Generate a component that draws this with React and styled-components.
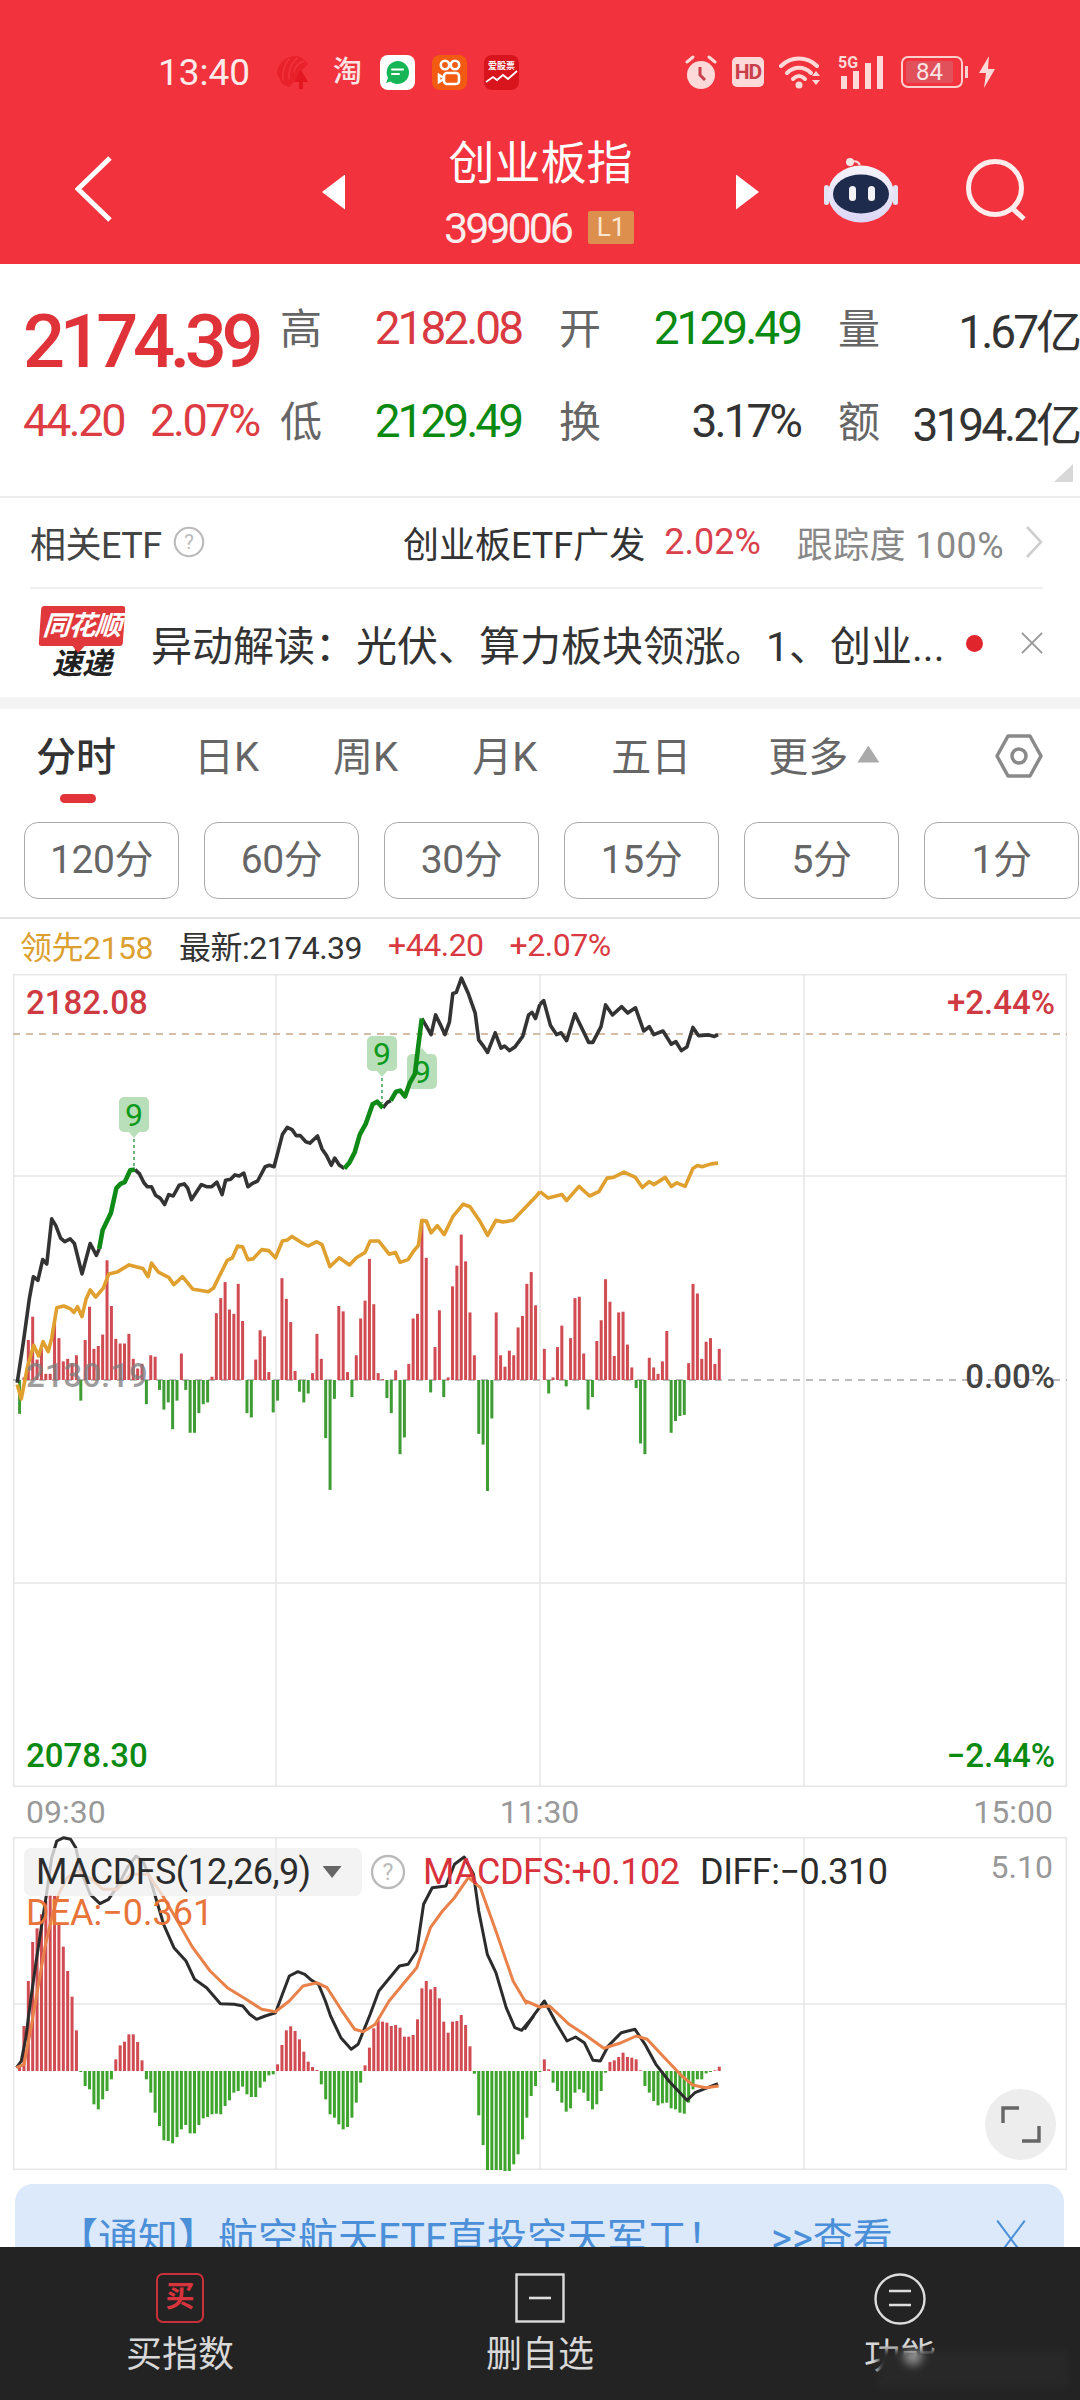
import styled, { createGlobalStyle } from 'styled-components';

// traced from the chart, in the crop coordinates they were read at
const fromLeft = (x, y) => [x / 2.904, 930 + y / 2.8];
const fromRight = (x, y) => [360 + x / 2.178, 930 + y / 2.8];
const macdLeft = (x, y) => [x / 2.904, 1770 + y / 3];
const macdRight = (x, y) => [400 + x / 2.306, 1770 + y / 3];

const toPoints = (list, map) =>
  list.map(([x, y]) => map(x, y).map((n) => n.toFixed(1)).join(',')).join(' ');

const priceA = [[50,1265],[68,1150],[85,1030],[97,968],[110,978],[124,920],[136,932],[150,806],[162,825],[176,860],[188,870],[204,862],[216,875],[238,960],[262,875],[280,908],[288,890]];
const priceB = [[288,890],[298,838],[322,790],[338,720],[350,708],[362,703],[378,670],[392,668]];
const priceC = [[392,668],[405,680],[418,705],[428,716],[440,716],[452,740],[465,748],[478,766],[490,738],[503,742],[520,712],[535,708],[545,720],[556,752],[585,710],[600,716],[615,716],[630,703],[645,738],[655,698],[670,695],[682,683],[695,686],[708,678],[720,716],[735,706],[748,700],[770,660],[782,656],[796,660],[820,570],[834,550],[848,556],[860,573],[872,573],[888,590],[900,594],[922,574],[935,610],[948,628],[962,656],[972,636],[985,655],[1000,665]];
const priceD = [[1000,665],[1015,648],[1030,620],[1045,570],[1062,540],[1082,485],[1095,478],[1112,495]];
const priceE = [[1112,495],[1125,480],[1135,475]];
const priceF = [[1135,475],[1150,450],[1162,447],[1176,463],[1190,425],[1205,400],[1215,320],[1225,245]];
const priceG = [[1225,245],[1240,270],[1252,290],[1265,235],[1280,265],[1292,290],[1305,255],[1315,175],[1325,172],[1340,132],[1360,175],[1380,230],[1390,305],[1402,320],[1416,340],[1438,285],[1455,328],[1465,322],[1480,335],[1495,325],[1518,295],[1535,235],[1545,228],[1555,245],[1568,205]];
const priceI = [[392,205],[400,195],[415,265],[428,290],[438,285],[450,307],[468,232],[498,312],[507,312],[525,268],[535,207],[550,235],[570,212],[583,230],[600,215],[618,280],[630,268],[640,290],[660,280],[678,317],[688,310],[700,335],[712,325],[725,270],[737,293],[760,291],[772,295],[780,290]];
const avgA = [[50,1270],[62,1310],[80,1220],[98,1160],[112,1190],[125,1150],[140,1178],[150,1140],[165,1055],[185,1050],[205,1058],[215,1068],[225,1052],[238,1080],[250,1030],[262,1005],[278,1025],[300,1000],[316,960],[340,955],[375,935],[415,945],[430,968],[440,930],[460,955],[490,970],[505,990],[530,968],[560,1003],[580,1006],[605,1010],[620,1000],[635,970],[660,922],[675,915],[690,882],[705,885],[720,920],[735,918],[760,892],[780,895],[800,915],[820,868],[835,865],[848,855],[880,875],[895,882],[920,870],[935,878],[958,940],[985,915],[1015,935],[1035,915],[1060,900],[1075,868],[1100,868],[1130,905],[1148,900],[1162,928],[1185,920],[1200,898],[1215,880],[1225,810],[1238,812],[1252,845],[1270,825],[1290,850],[1315,800],[1345,765],[1365,772],[1395,815],[1416,852],[1440,810],[1460,815],[1490,810],[1525,775],[1555,745],[1568,730]];
const avgB = [[392,730],[410,748],[440,738],[450,755],[477,715],[500,742],[520,730],[538,692],[552,690],[575,675],[600,690],[615,718],[630,702],[640,710],[665,690],[678,715],[690,705],[708,715],[725,665],[735,657],[745,660],[765,652],[780,650]];

// volume bars: y the bar reaches, 1258 is the base line
const volumes = [1258,1352,1250,1145,1080,1200,1170,1240,1240,1090,1140,1205,1198,1210,1188,1315,1145,1052,1170,1162,1130,922,1050,1142,1155,1155,1128,1198,1225,1212,1325,1188,1192,1285,1340,1320,1395,1315,1183,1285,1405,1405,1350,1325,1320,1248,1070,1028,983,1060,1072,988,1092,1350,1362,1200,1118,1135,1235,1348,1315,972,1030,1095,1232,1290,1320,1295,1238,1128,1198,1420,1565,1310,1050,1065,1235,1305,1188,1085,1035,918,1045,1238,1255,1308,1350,1230,1465,1418,1212,1085,1072,808,915,1292,1165,1062,1305,1250,995,937,850,925,1068,1188,1408,1438,1568,1365,1068,1188,1220,1175,1188,1110,1078,988,955,1048,1258,1170,1295,1250,1165,1105,1275,1140,1028,1024,1183,1340,1305,1148,1090,975,1038,1190,1068,1066,1158,1222,1280,1435,1465,1195,1222,1240,1205,1120,1405,1372,1358,1355,1210,988,1015,1198,1150,1140,1212,1170];

// macd bars: 900 is the zero line
const macdBars = [900,885,765,630,513,472,430,390,372,375,455,527,600,677,778,903,945,955,1000,1015,985,960,925,865,823,812,790,790,813,868,925,965,1025,1065,1108,1110,1117,1098,1075,1062,1087,1087,1062,1042,1038,1030,1028,1030,1005,988,965,960,947,970,978,978,950,932,913,910,880,822,778,766,780,805,842,872,888,897,940,985,1030,1040,1060,1075,1068,1040,995,935,883,830,772,748,752,755,765,762,770,797,797,792,745,652,630,655,648,682,752,785,752,750,732,762,826,908,1033,1122,1197,1197,1197,1197,1200,1200,1180,1150,1105,1040,975,945,903,865,895,935,960,995,1022,1012,965,955,965,990,1015,1000,960,905,873,868,858,845,858,860,865,898,945,965,990,1003,997,995,1012,1015,1025,1028,995,955,925,925,907,903,898,887];

const diffA = [[48,890],[62,870],[75,800],[90,680],[105,570],[120,470],[135,370],[150,260],[165,210],[185,200],[205,205],[220,230],[235,300],[262,370],[290,398],[315,385],[345,340],[370,290],[395,255],[415,270],[435,320],[455,390],[475,460],[505,530],[540,570],[565,625],[600,650],[640,698],[680,700],[705,705],[725,730],[745,745],[770,735],[800,725],[820,670],[840,615],[865,602],[885,610],[905,628],[925,640],[945,690],[960,735],[990,800],[1020,835],[1040,820],[1075,730],[1100,660],[1140,610],[1160,585],[1185,580],[1210,540],[1230,400],[1255,350],[1295,345],[1320,280],[1348,258],[1375,310],[1390,420],[1415,550],[1440,605],[1470,710],[1495,770],[1515,778],[1550,735]];
const diffB = [[287,775],[310,730],[333,690],[360,755],[385,810],[405,798],[425,815],[445,868],[462,870],[480,825],[510,785],[542,775],[565,820],[590,880],[620,930],[662,988],[680,965],[705,952],[733,938]];
const deaA = [[48,890],[70,880],[90,770],[110,650],[130,530],[150,440],[170,370],[195,320],[225,300],[260,320],[300,355],[340,355],[380,310],[430,310],[470,370],[510,440],[560,530],[610,600],[660,650],[710,682],[760,715],[800,722],[840,690],[880,645],[920,635],[950,650],[990,715],[1030,775],[1055,782],[1090,760],[1130,690],[1170,640],[1210,590],[1250,470],[1285,420],[1320,380],[1360,320],[1395,350],[1440,480],[1490,630],[1530,700]];
const deaB = [[290,690],[322,708],[345,705],[390,760],[425,790],[470,832],[510,815],[545,795],[570,805],[610,860],[650,915],[675,942],[705,950],[735,945]];

const barX = (i) => 15.2 + i * 4.373 - 1.5;

const FRAME_X = [13, 276, 540, 804, 1067];

const Bars = ({ data, toY, base, up, down }) =>
  data.map((value, i) => {
    const y = toY(value);
    if (Math.abs(y - base) < 0.4) return null;
    return (
      <rect
        key={i}
        x={barX(i)}
        y={Math.min(y, base)}
        width="3"
        height={Math.abs(y - base)}
        fill={y < base ? up : down}
      />
    );
  });

const Badge = ({ x, y, pointUp, stem }) => (
  <g>
    {stem && <line x1={x} x2={x} y1={y + 42} y2={y + 42 + stem} stroke="#3c9c50" strokeWidth="1.5" strokeDasharray="3 3" />}
    <rect x={x - 15} y={y} width="30" height="35" rx="5" fill="#b9dfba" />
    {pointUp ? (
      <path d={`M${x - 6} ${y + 1}L${x} ${y - 6}L${x + 6} ${y + 1}Z`} fill="#b9dfba" />
    ) : (
      <path d={`M${x - 6} ${y + 34}L${x} ${y + 41}L${x + 6} ${y + 34}Z`} fill="#b9dfba" />
    )}
    <text x={x} y={y + 29} textAnchor="middle" fontSize="32" fontFamily="Roboto, sans-serif" fill="#0c9a1c">9</text>
  </g>
);

const ShellIcon = () => (
  <svg width="38" height="36" viewBox="0 0 38 36">
    <path d="M3 20C3 10 11 3 20 2C26 2 31 5 34 10L27 17L23 25L15 33L8 30Z" fill="#e8222b" />
    <g fill="none" stroke="#f2333d" strokeWidth="1.6" strokeLinecap="round">
      <path d="M9 26C8 18 10 11 15 5" />
      <path d="M15 25C14 18 17 10 23 4" />
      <path d="M20 18C21 13 24 9 30 7" />
    </g>
    <path d="M27 16L34 28H29V35H25V28H20Z" fill="#e2171f" />
  </svg>
);

const ChatApp = () => (
  <svg width="35" height="35" viewBox="0 0 35 35">
    <rect width="35" height="35" rx="8" fill="#fff" />
    <path d="M17.5 6a11.5 11.5 0 1 1-7 20.6L6 28l2-5A11.5 11.5 0 0 1 17.5 6Z" fill="#16b657" />
    <path d="M12 14.5h11M12 19h7" stroke="#fff" strokeWidth="2" strokeLinecap="round" />
  </svg>
);

const OrangeApp = () => (
  <svg width="35" height="35" viewBox="0 0 35 35">
    <rect width="35" height="35" rx="8" fill="#f35a12" />
    <g fill="none" stroke="#fff" strokeWidth="2.6">
      <circle cx="13" cy="10" r="4.2" />
      <circle cx="23" cy="10" r="4.2" />
      <rect x="12" y="18" width="15" height="11" rx="3" />
      <path d="M12 23L7 20V27L12 24" />
    </g>
  </svg>
);

const StockApp = () => (
  <svg width="35" height="35" viewBox="0 0 35 35">
    <rect width="35" height="35" rx="8" fill="#d8141c" />
    <text x="17.5" y="14" textAnchor="middle" fontSize="9" fontWeight="700" fontFamily="Noto Sans CJK SC, sans-serif" fill="#fff">爱股票</text>
    <path d="M2 27L9 22L13 25L19 20L24 24L33 16" fill="none" stroke="#fff" strokeWidth="1.8" />
  </svg>
);

const AlarmIcon = () => (
  <svg width="32" height="36" viewBox="0 0 32 36">
    <circle cx="16" cy="21" r="14" fill="#fdd9d9" />
    <path d="M2 8L8 3M30 8L24 3" stroke="#fdd9d9" strokeWidth="3" strokeLinecap="round" />
    <path d="M15 13V21L20 26" fill="none" stroke="#c9404a" strokeWidth="3" />
  </svg>
);

const WifiIcon = () => (
  <svg width="44" height="34" viewBox="0 0 44 34">
    <g fill="none" stroke="#fdd9d9" strokeWidth="4" strokeLinecap="round">
      <path d="M2 11C12 1 28 1 38 11" />
      <path d="M8 18C15 11 25 11 32 18" />
      <path d="M14 24C18 20 22 20 26 24" />
    </g>
    <circle cx="20" cy="30" r="3.5" fill="#fdd9d9" />
    <path d="M33 21L37 16L41 21ZM33 25H41L37 30Z" fill="#fdd9d9" />
  </svg>
);

const SignalIcon = () => (
  <svg width="46" height="36" viewBox="0 0 46 36">
    <text x="0" y="14" fontSize="16" fontWeight="700" fontFamily="Roboto, sans-serif" fill="#fdd9d9">5G</text>
    <g fill="#fdd9d9">
      <rect x="3" y="22" width="6" height="13" />
      <rect x="15" y="17" width="6" height="18" />
      <rect x="27" y="9" width="6" height="26" />
      <rect x="39" y="2" width="6" height="33" />
    </g>
  </svg>
);

const BoltIcon = () => (
  <svg width="18" height="32" viewBox="0 0 18 32">
    <path d="M11 0L1 17H8L6 32L17 13H10Z" fill="#fdd9d9" />
  </svg>
);

const BackIcon = () => (
  <svg width="38" height="66" viewBox="0 0 38 66">
    <path d="M35 2L3 33L35 64" fill="none" stroke="#fff" strokeWidth="5" />
  </svg>
);

const RobotIcon = () => (
  <svg width="74" height="66" viewBox="0 0 74 66">
    <defs>
      <linearGradient id="shell" x1="0" y1="0" x2="0" y2="1">
        <stop offset="0" stopColor="#f5f5fb" />
        <stop offset="1" stopColor="#dcd6f7" />
      </linearGradient>
    </defs>
    <path d="M26 9C27 3 33 3 36 8" fill="none" stroke="#f3dede" strokeWidth="2" />
    <circle cx="26" cy="5" r="4" fill="#f5e6e6" />
    <rect x="0" y="28" width="5" height="20" rx="2.5" fill="#e3e3f3" />
    <rect x="69" y="28" width="5" height="20" rx="2.5" fill="#e3e3f3" />
    <ellipse cx="37" cy="37" rx="33" ry="28.5" fill="url(#shell)" />
    <ellipse cx="37" cy="37" rx="28" ry="19.5" fill="#1f2b4d" />
    <rect x="25" y="29" width="7" height="15" rx="3.5" fill="#f4f4f8" />
    <rect x="44" y="29" width="7" height="15" rx="3.5" fill="#f4f4f8" />
  </svg>
);

const SearchIcon = () => (
  <svg width="62" height="62" viewBox="0 0 62 62">
    <circle cx="30" cy="29" r="26.5" fill="none" stroke="#ffecec" strokeWidth="5" />
    <path d="M47 49L59 60" stroke="#ffecec" strokeWidth="5" />
  </svg>
);

const HelpIcon = ({ size }) => (
  <svg width={size} height={size} viewBox="0 0 36 36">
    <circle cx="18" cy="18" r="16" fill="none" stroke="#bbb" strokeWidth="2.4" />
    <text x="18" y="26" textAnchor="middle" fontSize="23" fontFamily="Roboto, sans-serif" fill="#bbb">?</text>
  </svg>
);

const Chevron = () => (
  <svg width="18" height="32" viewBox="0 0 18 32">
    <path d="M2 1L16 16L2 31" fill="none" stroke="#cfcfcf" strokeWidth="2.6" />
  </svg>
);

const CloseIcon = ({ color, width, height }) => (
  <svg width={width} height={height} viewBox="0 0 24 24" preserveAspectRatio="none">
    <path d="M1 1L23 23M23 1L1 23" stroke={color} strokeWidth="2" vectorEffect="non-scaling-stroke" />
  </svg>
);

const SettingsIcon = () => (
  <svg width="48" height="46" viewBox="0 0 48 46">
    <path d="M13 3H35L46 23L35 43H13L2 23Z" fill="none" stroke="#8a8a8a" strokeWidth="3.5" strokeLinejoin="round" />
    <circle cx="24" cy="23" r="7" fill="none" stroke="#8a8a8a" strokeWidth="3.5" />
  </svg>
);

const ExpandIcon = () => (
  <svg width="40" height="38" viewBox="0 0 40 38">
    <path d="M2 17V2H18M38 20V35H21" fill="none" stroke="#666" strokeWidth="3.4" />
  </svg>
);

const MinusBox = () => (
  <svg width="50" height="50" viewBox="0 0 50 50">
    <rect x="1.5" y="1.5" width="47" height="47" fill="none" stroke="#ddd" strokeWidth="2.4" />
    <path d="M14 25H36" stroke="#ddd" strokeWidth="2.6" />
  </svg>
);

const MenuCircle = () => (
  <svg width="52" height="52" viewBox="0 0 52 52">
    <circle cx="26" cy="26" r="24.5" fill="none" stroke="#ddd" strokeWidth="2.4" />
    <path d="M15 18H37M15 32H37" stroke="#ddd" strokeWidth="2.6" />
  </svg>
);

const PERIODS = ['120分', '60分', '30分', '15分', '5分', '1分'];
const TABS = ['日K', '周K', '月K', '五日'];

const GlobalStyle = createGlobalStyle`
  html, body {
    margin: 0;
    padding: 0;
    background: #fff;
  }
  * {
    box-sizing: border-box;
  }
`;

const App = () => {
  return (
    <Page>
      <GlobalStyle />
      <Scroller>
        <Header>
          <StatusBar>
            <StatusLeft>
              <Clock>13:40</Clock>
              <ShellIcon />
              <TaoIcon>淘</TaoIcon>
              <ChatApp />
              <OrangeApp />
              <StockApp />
            </StatusLeft>
            <StatusRight>
              <AlarmIcon />
              <HdTag>HD</HdTag>
              <WifiIcon />
              <SignalIcon />
              <Battery>
                <BatteryFill>84</BatteryFill>
              </Battery>
              <BoltIcon />
            </StatusRight>
          </StatusBar>
          <NavRow>
            <BackButton>
              <BackIcon />
            </BackButton>
            <Arrow $side="left" />
            <TitleBlock>
              <Title>创业板指</Title>
              <CodeLine>
                399006
                <LevelTag>L1</LevelTag>
              </CodeLine>
            </TitleBlock>
            <Arrow $side="right" />
            <RobotSlot>
              <RobotIcon />
            </RobotSlot>
            <SearchSlot>
              <SearchIcon />
            </SearchSlot>
          </NavRow>
        </Header>

        <Stats>
          <MainPrice>2174.39</MainPrice>
          <StatPair>
            <StatLabel>高</StatLabel>
            <StatValue $color="#d93a41">2182.08</StatValue>
          </StatPair>
          <StatPair>
            <StatLabel>开</StatLabel>
            <StatValue $color="#0b8a12">2129.49</StatValue>
          </StatPair>
          <StatPair>
            <StatLabel>量</StatLabel>
            <StatValue $color="#333">1.67亿</StatValue>
          </StatPair>
          <ChangeCell>
            <span>44.20</span>
            <span>2.07%</span>
          </ChangeCell>
          <StatPair>
            <StatLabel>低</StatLabel>
            <StatValue $color="#0b8a12">2129.49</StatValue>
          </StatPair>
          <StatPair>
            <StatLabel>换</StatLabel>
            <StatValue $color="#333">3.17%</StatValue>
          </StatPair>
          <StatPair>
            <StatLabel>额</StatLabel>
            <StatValue $color="#333">3194.2亿</StatValue>
          </StatPair>
          <CornerMark />
        </Stats>

        <EtfRow>
          <EtfName>相关ETF</EtfName>
          <HelpSlot>
            <HelpIcon size={32} />
          </HelpSlot>
          <EtfFund>创业板ETF广发</EtfFund>
          <EtfChange>2.02%</EtfChange>
          <EtfTrack>跟踪度 100%</EtfTrack>
          <ChevronSlot>
            <Chevron />
          </ChevronSlot>
        </EtfRow>

        <NewsRow>
          <NewsLogo>
            <LogoFlag>同花顺</LogoFlag>
            <LogoWord>速递</LogoWord>
          </NewsLogo>
          <NewsText>{'异动解读\uFF1A光伏、算力板块领涨。1、创业...'}</NewsText>
          <RedDot />
          <CloseSlot>
            <CloseIcon color="#999" width={22} height={22} />
          </CloseSlot>
        </NewsRow>

        <TabBar>
          <ActiveTab>分时</ActiveTab>
          {TABS.map((tab) => (
            <Tab key={tab}>{tab}</Tab>
          ))}
          <MoreTab>
            更多
            <MoreCaret />
          </MoreTab>
          <SettingsSlot>
            <SettingsIcon />
          </SettingsSlot>
        </TabBar>

        <PeriodRow>
          {PERIODS.map((period) => (
            <PeriodButton key={period}>{period}</PeriodButton>
          ))}
        </PeriodRow>

        <Legend>
          <LegendItem $color="#dca02f">领先2158</LegendItem>
          <LegendItem $color="#333">最新:2174.39</LegendItem>
          <LegendItem $color="#d93a41">+44.20</LegendItem>
          <LegendItem $color="#d93a41">+2.07%</LegendItem>
        </Legend>

        <PriceChart>
          <ChartSvg width="1054" height="813" viewBox="13 973 1054 813">
            <g stroke="#e6e6e6" strokeWidth="1.5">
              <rect x="13.7" y="973.7" width="1052.6" height="811.6" fill="none" />
              {FRAME_X.slice(1, 4).map((x) => (
                <line key={x} x1={x} x2={x} y1="973" y2="1786" />
              ))}
              <line x1="13" x2="1067" y1="1175" y2="1175" />
              <line x1="13" x2="1067" y1="1582" y2="1582" />
            </g>
            <line x1="13" x2="1067" y1="1033" y2="1033" stroke="#c7a98c" strokeWidth="1.5" strokeDasharray="7 6" />
            <line x1="13" x2="1067" y1="1379" y2="1379" stroke="#a8a8a8" strokeWidth="1.5" strokeDasharray="7 6" />
            <Bars data={volumes} toY={(v) => 930 + v / 2.8} base={1379} up="#d04b52" down="#3f9c34" />
            <Badge x={134} y={1096} stem={31} />
            <Badge x={382} y={1035} stem={25} />
            <Badge x={422} y={1053} pointUp />
            <g fill="none" stroke="#e0a030" strokeWidth="3.6" strokeLinejoin="round">
              <polyline points={toPoints(avgA, fromLeft)} />
              <polyline points={toPoints(avgB, fromRight)} />
            </g>
            <g fill="none" stroke="#333" strokeWidth="3.6" strokeLinejoin="round">
              <polyline points={toPoints(priceA, fromLeft)} />
              <polyline points={toPoints(priceC, fromLeft)} />
              <polyline points={toPoints(priceE, fromLeft)} />
              <polyline points={toPoints(priceG, fromLeft)} />
              <polyline points={toPoints(priceI, fromRight)} />
            </g>
            <g fill="none" stroke="#0f8a17" strokeWidth="4.6" strokeLinejoin="round">
              <polyline points={toPoints(priceB, fromLeft)} />
              <polyline points={toPoints(priceD, fromLeft)} />
              <polyline points={toPoints(priceF, fromLeft)} />
            </g>
          </ChartSvg>
          <ChartLabel $left={13} $top={10} $color="#cf3a42">2182.08</ChartLabel>
          <ChartLabel $right={12} $top={10} $color="#cf3a42">+2.44%</ChartLabel>
          <ChartLabel $left={13} $top={383} $color="rgba(125,125,125,.75)">2130.19</ChartLabel>
          <ChartLabel $right={12} $top={384} $color="#444">0.00%</ChartLabel>
          <ChartLabel $left={13} $top={763} $color="#0b8a12">2078.30</ChartLabel>
          <ChartLabel $right={12} $top={763} $color="#0b8a12">−2.44%</ChartLabel>
        </PriceChart>

        <TimeAxis>
          <span>09:30</span>
          <span>11:30</span>
          <span>15:00</span>
        </TimeAxis>

        <MacdChart>
          <IndicatorPill>
            MACDFS(12,26,9)
            <PillCaret />
          </IndicatorPill>
          <ChartSvg width="1054" height="333" viewBox="13 1836 1054 333">
            <g stroke="#e6e6e6" strokeWidth="1.5">
              <rect x="13.7" y="1836.7" width="1052.6" height="331.6" fill="none" />
              {FRAME_X.slice(1, 4).map((x) => (
                <line key={x} x1={x} x2={x} y1="1836" y2="2169" />
              ))}
              <line x1="13" x2="1067" y1="2003" y2="2003" />
            </g>
            <Bars data={macdBars} toY={(v) => 1770 + v / 3} base={2070} up="#d04b52" down="#3ea42e" />
            <g fill="none" stroke="#2c2c2c" strokeWidth="3" strokeLinejoin="round">
              <polyline points={toPoints(diffA, macdLeft)} />
              <polyline points={toPoints(diffB, macdRight)} />
            </g>
            <g fill="none" stroke="#e8824a" strokeWidth="3" strokeLinejoin="round">
              <polyline points={toPoints(deaA, macdLeft)} />
              <polyline points={toPoints(deaB, macdRight)} />
            </g>
          </ChartSvg>
          <MacdHelp>
            <HelpIcon size={36} />
          </MacdHelp>
          <MacdValue $left={410} $color="#d8323c">MACDFS:+0.102</MacdValue>
          <MacdValue $left={687} $color="#2c2c2c">DIFF:−0.310</MacdValue>
          <MacdScale>5.10</MacdScale>
          <DeaValue>DEA:−0.361</DeaValue>
          <ExpandButton>
            <ExpandIcon />
          </ExpandButton>
        </MacdChart>

        <NoticeBanner>
          <NoticeText>{'【通知】航空航天ETF直投空天军工\uFF01'}</NoticeText>
          <NoticeLink>&gt;&gt;查看</NoticeLink>
          <NoticeClose>
            <CloseIcon color="#4a8fd8" width={30} height={40} />
          </NoticeClose>
        </NoticeBanner>
      </Scroller>

      <BottomBar>
        <BottomItem>
          <BuyBox>买</BuyBox>
          <BottomLabel>买指数</BottomLabel>
        </BottomItem>
        <BottomItem>
          <MinusBox />
          <BottomLabel>删自选</BottomLabel>
        </BottomItem>
        <BottomItem>
          <MenuCircle />
          <BottomLabel>功能</BottomLabel>
        </BottomItem>
        <WatermarkSmudge />
      </BottomBar>
    </Page>
  );
};

export default App;

const Page = styled.div`
  width: 1080px;
  height: 2400px;
  display: flex;
  flex-direction: column;
  overflow: hidden;
  font-family: Roboto, 'Noto Sans CJK SC', sans-serif;
  background: #fff;
`;

const Scroller = styled.main`
  flex: 1;
  min-height: 0;
  overflow: hidden;
`;

const Header = styled.header`
  height: 264px;
  background: #f2333d;
`;

const StatusBar = styled.div`
  height: 120px;
  padding: 24px 84px 0 158px;
  display: flex;
  justify-content: space-between;
  align-items: center;
`;

const StatusLeft = styled.div`
  display: flex;
  align-items: center;
  gap: 17px;
`;

const Clock = styled.span`
  width: 99px;
  font-size: 37px;
  color: #fdeaea;
`;

const TaoIcon = styled.span`
  width: 30px;
  margin: 0 0 0 4px;
  font-size: 29px;
  font-weight: 500;
  line-height: 36px;
  color: #fde3e3;
`;

const StatusRight = styled.div`
  display: flex;
  align-items: center;
  gap: 15px;
`;

const HdTag = styled.span`
  width: 32px;
  height: 30px;
  border-radius: 5px;
  background: #fdd9d9;
  color: #c9404a;
  font-size: 21px;
  font-weight: 700;
  letter-spacing: -1px;
  line-height: 30px;
  text-align: center;
`;

const Battery = styled.div`
  position: relative;
  width: 62px;
  height: 32px;
  margin-left: 2px;
  padding: 3px;
  border: 2px solid #fdd0d0;
  border-radius: 7px;

  &::after {
    content: '';
    position: absolute;
    right: -7px;
    top: 8px;
    width: 3px;
    height: 12px;
    background: #fdd0d0;
  }
`;

const BatteryFill = styled.div`
  width: 47px;
  height: 22px;
  border-radius: 2px;
  background: #e0515b;
  color: #fde3e3;
  font-size: 24px;
  line-height: 22px;
  text-align: center;
`;

const NavRow = styled.div`
  height: 144px;
  padding-left: 75px;
  display: flex;
  align-items: center;
`;

const BackButton = styled.div`
  width: 38px;
  height: 66px;
  margin-top: -6px;
`;

const Arrow = styled.div`
  width: 23px;
  height: 35px;
  margin-left: ${(p) => (p.$side === 'left' ? '209px' : '0')};
  background: #fff;
  clip-path: ${(p) =>
    p.$side === 'left'
      ? 'polygon(0 50%, 100% 0, 100% 100%)'
      : 'polygon(0 0, 100% 50%, 0 100%)'};
`;

const TitleBlock = styled.div`
  width: 391px;
  display: flex;
  flex-direction: column;
  align-items: center;
  color: #fff;
`;

const Title = styled.div`
  font-size: 46px;
  line-height: 60px;
  margin-top: -2px;
`;

const CodeLine = styled.div`
  display: flex;
  align-items: center;
  height: 44px;
  margin-top: 13px;
  margin-left: -3px;
  font-size: 43px;
  letter-spacing: -3px;
  color: #fdeeee;
`;

const LevelTag = styled.span`
  width: 46px;
  height: 33px;
  margin-left: 17px;
  background: #dd8f4d;
  border-radius: 2px;
  color: #fce8d0;
  font-size: 26px;
  letter-spacing: 0;
  line-height: 33px;
  text-align: center;
`;

const RobotSlot = styled.div`
  width: 74px;
  height: 66px;
  margin: -4px 0 0 65px;
`;

const SearchSlot = styled.div`
  width: 62px;
  height: 62px;
  margin: -4px 0 0 67px;
`;

const Stats = styled.section`
  position: relative;
  height: 234px;
  padding: 17px 0 0 23px;
  border-bottom: 2px solid #eee;
  display: grid;
  grid-template-columns: 257px 279px 279px 241px;
  grid-auto-rows: 93px;
  white-space: nowrap;
`;

const MainPrice = styled.div`
  padding-top: 19px;
  font-size: 74px;
  line-height: 84px;
  font-weight: 500;
  letter-spacing: -5.4px;
  color: #df3339;
`;

const StatPair = styled.div`
  width: 241px;
  display: flex;
  justify-content: space-between;
  align-items: center;
`;

const StatLabel = styled.span`
  margin-bottom: 4px;
  font-size: 42px;
  color: #666;
`;

const StatValue = styled.span`
  font-size: 46px;
  letter-spacing: -3px;
  color: ${(p) => p.$color};
`;

const ChangeCell = styled.div`
  display: flex;
  align-items: center;
  gap: 26px;
  font-size: 45px;
  letter-spacing: -2.4px;
  color: #dc3c42;
`;

const CornerMark = styled.div`
  position: absolute;
  right: 7px;
  bottom: 14px;
  width: 19px;
  height: 18px;
  background: #d8d8d8;
  clip-path: polygon(100% 0, 100% 100%, 0 100%);
`;

const EtfRow = styled.div`
  height: 91px;
  margin: 0 37px 0 30px;
  padding-bottom: 2px;
  display: flex;
  align-items: center;
  border-bottom: 2px solid #efefef;
  font-size: 36px;
  white-space: nowrap;
`;

const EtfName = styled.span`
  color: #444;
  letter-spacing: -0.5px;
`;

const HelpSlot = styled.span`
  display: flex;
  margin-left: 11px;
`;

const EtfFund = styled.span`
  margin-left: auto;
  color: #333;
`;

const EtfChange = styled.span`
  margin-left: 19px;
  color: #d9414c;
`;

const EtfTrack = styled.span`
  margin-left: 36px;
  letter-spacing: 0.4px;
  color: #888;
`;

const ChevronSlot = styled.span`
  display: flex;
  margin-left: 21px;
`;

const NewsRow = styled.div`
  height: 108px;
  padding: 0 37px 0 38px;
  display: flex;
  align-items: center;
  border-bottom: 12px solid #f4f4f4;
  box-sizing: content-box;
`;

const NewsLogo = styled.div`
  width: 88px;
  display: flex;
  flex-direction: column;
  align-items: center;
`;

const LogoFlag = styled.div`
  position: relative;
  width: 84px;
  height: 40px;
  background: #e0383b;
  border-radius: 3px;
  transform: skewX(-4deg);
  color: #fff;
  font-size: 27px;
  font-weight: 700;
  font-style: italic;
  letter-spacing: -1px;
  line-height: 40px;
  text-align: center;

  &::after {
    content: '';
    position: absolute;
    left: 34px;
    bottom: -7px;
    border: 6px solid transparent;
    border-bottom: 0;
    border-top: 7px solid #e0383b;
  }
`;

const LogoWord = styled.div`
  margin-top: 2px;
  font-size: 30px;
  font-weight: 700;
  font-style: italic;
  line-height: 32px;
  color: #222;
`;

const NewsText = styled.div`
  margin-left: 25px;
  font-size: 41px;
  color: #333;
  white-space: nowrap;
`;

const RedDot = styled.span`
  width: 17px;
  height: 17px;
  margin-left: auto;
  border-radius: 50%;
  background: #e0252d;
`;

const CloseSlot = styled.span`
  display: flex;
  margin-left: 38px;
`;

const TabBar = styled.nav`
  height: 90px;
  margin-bottom: 23px;
  padding: 0 37px 0 36px;
  display: flex;
  align-items: center;
  font-size: 40px;
  color: #666;
  white-space: nowrap;
`;

const Tab = styled.span`
  margin-left: 74px;
`;

const ActiveTab = styled.span`
  position: relative;
  margin-right: 4px;
  font-size: 40px;
  font-weight: 500;
  color: #333;

  &::after {
    content: '';
    position: absolute;
    left: 24px;
    bottom: -20px;
    width: 36px;
    height: 9px;
    border-radius: 5px;
    background: #e0343a;
  }
`;

const MoreTab = styled.span`
  display: flex;
  align-items: center;
  margin-left: 77px;
`;

const MoreCaret = styled.span`
  width: 22px;
  height: 17px;
  margin-left: 9px;
  background: #aaa;
  clip-path: polygon(50% 0, 100% 100%, 0 100%);
`;

const SettingsSlot = styled.span`
  display: flex;
  margin: 4px 0 0 auto;
`;

const PeriodRow = styled.div`
  height: 97px;
  padding-left: 24px;
  display: flex;
  gap: 25px;
  border-bottom: 2px solid #e5e5e5;
`;

const PeriodButton = styled.div`
  flex: none;
  width: 155px;
  height: 77px;
  border: 1px solid #aaa;
  border-radius: 14px;
  color: #666;
  font-size: 39px;
  line-height: 75px;
  text-align: center;
  letter-spacing: -0.4px;
`;

const Legend = styled.div`
  height: 55px;
  padding: 0 0 3px 20px;
  display: flex;
  align-items: center;
  gap: 26px;
`;

const LegendItem = styled.span`
  font-size: 32px;
  letter-spacing: -0.5px;
  color: ${(p) => p.$color};
`;

const PriceChart = styled.div`
  position: relative;
  width: 1054px;
  height: 813px;
  margin-left: 13px;
`;

const ChartSvg = styled.svg`
  display: block;
  overflow: visible;
`;

const ChartLabel = styled.span`
  position: absolute;
  top: ${(p) => p.$top}px;
  ${(p) => (p.$right !== undefined ? `right: ${p.$right}px;` : `left: ${p.$left}px;`)}
  font-size: 33px;
  font-weight: 500;
  line-height: 38px;
  color: ${(p) => p.$color};
`;

const TimeAxis = styled.div`
  height: 50px;
  margin: 0 27px 0 26px;
  display: flex;
  justify-content: space-between;
  align-items: center;
  font-size: 32px;
  color: #999;
`;

const MacdChart = styled.div`
  position: relative;
  width: 1054px;
  height: 333px;
  margin-left: 13px;
`;

const IndicatorPill = styled.div`
  position: absolute;
  left: 11px;
  top: 11px;
  width: 338px;
  height: 48px;
  padding-left: 12px;
  display: flex;
  align-items: center;
  border-radius: 7px;
  background: rgba(240, 240, 240, 0.78);
  color: #2c2c2c;
  font-size: 36px;
  letter-spacing: -0.6px;
  z-index: 1;
`;

const PillCaret = styled.span`
  width: 19px;
  height: 12px;
  margin-left: 12px;
  background: #666;
  clip-path: polygon(0 0, 100% 0, 50% 100%);
`;

const MacdHelp = styled.div`
  position: absolute;
  left: 357px;
  top: 17px;
  display: flex;
`;

const MacdValue = styled.span`
  position: absolute;
  left: ${(p) => p.$left}px;
  top: 14px;
  font-size: 36px;
  line-height: 42px;
  letter-spacing: -0.5px;
  color: ${(p) => p.$color};
`;

const MacdScale = styled.span`
  position: absolute;
  right: 14px;
  top: 11px;
  font-size: 32px;
  line-height: 38px;
  color: #999;
`;

const DeaValue = styled.span`
  position: absolute;
  left: 13px;
  top: 55px;
  font-size: 36px;
  line-height: 42px;
  color: #e8743a;
`;

const ExpandButton = styled.div`
  position: absolute;
  left: 972px;
  top: 252px;
  width: 71px;
  height: 71px;
  display: flex;
  align-items: center;
  justify-content: center;
  border-radius: 50%;
  background: #ededed;
`;

const NoticeBanner = styled.div`
  height: 90px;
  margin: 14px 16px 0 15px;
  padding: 27px 38px 0 43px;
  display: flex;
  align-items: flex-start;
  border-radius: 18px 18px 0 0;
  background: #dbe9fb;
  color: #4a8fd8;
  font-size: 40px;
  line-height: 56px;
  white-space: nowrap;
`;

const NoticeText = styled.span`
  width: 713px;
`;

const NoticeLink = styled.span``;

const NoticeClose = styled.span`
  display: flex;
  margin: 8px 0 0 auto;
`;

const BottomBar = styled.footer`
  position: relative;
  flex: none;
  height: 153px;
  display: flex;
  background: #232323;
`;

const BottomItem = styled.div`
  flex: 1;
  padding-top: 26px;
  display: flex;
  flex-direction: column;
  align-items: center;
`;

const BuyBox = styled.div`
  width: 48px;
  height: 50px;
  border: 2.5px solid #c8303a;
  border-radius: 7px;
  color: #d8343e;
  font-size: 29px;
  font-weight: 700;
  line-height: 44px;
  text-align: center;
`;

const BottomLabel = styled.div`
  margin-top: 10px;
  font-size: 36px;
  line-height: 44px;
  color: #d8d8d8;
`;

const WatermarkSmudge = styled.div`
  position: absolute;
  left: 878px;
  top: 103px;
  width: 190px;
  height: 38px;
  background:
    radial-gradient(circle at 35px 6px, rgba(215, 215, 215, 0.75), transparent 14px),
    #282828;
  filter: blur(3px);
`;
